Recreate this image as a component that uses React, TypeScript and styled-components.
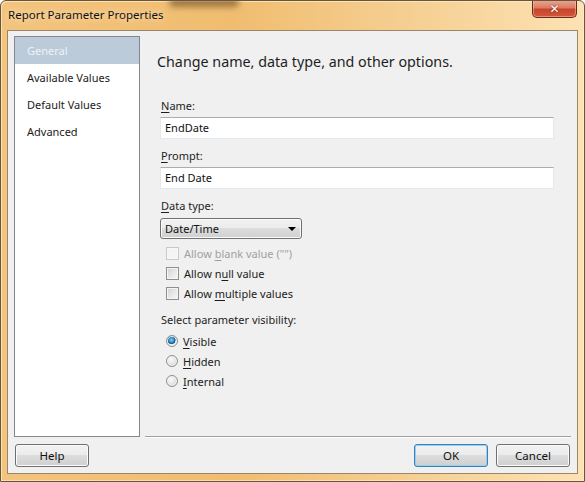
import React from 'react';
import styled, { createGlobalStyle } from 'styled-components';

const Global = createGlobalStyle`
  html, body { margin: 0; padding: 0; background: #ffffff; }
  body { width: 585px; height: 482px; overflow: hidden; }
  * { box-sizing: border-box; }
`;

const Window = styled.div`
  position: relative;
  width: 585px;
  height: 482px;
  display: flex;
  flex-direction: column;
  border: 1px solid #6a5634;
  border-radius: 6px 6px 0 0;
  background: linear-gradient(90deg, #f3c47e 0%, #f0bd70 40%, #f5cf92 70%, #fde2b3 100%);
  box-shadow: inset 1px 1px 0 rgba(255, 240, 210, 0.7), inset -1px -1px 0 rgba(255, 240, 210, 0.6);
  font-family: "Noto Sans", "Segoe UI", sans-serif;
  font-size: 11px;
  color: #000;
  overflow: hidden;
`;

const GlassSmudge = styled.div`
  position: absolute;
  left: 168px;
  top: -4px;
  width: 70px;
  height: 10px;
  border-radius: 6px;
  background: rgba(90, 60, 25, 0.55);
  filter: blur(3px);
  pointer-events: none;
`;

const TitleBar = styled.div`
  height: 29px;
  display: flex;
  justify-content: space-between;
  align-items: flex-start;
  padding-left: 7px;
`;

const Title = styled.div`
  margin-top: 6px;
  font-size: 11.5px;
  color: #111;
  text-shadow: 0 0 6px rgba(255, 245, 225, 0.95);
`;

const CloseButton = styled.div`
  width: 45px;
  height: 18px;
  margin-right: 7px;
  margin-top: -1px;
  border: 1px solid #6b2a1c;
  border-top: none;
  border-radius: 0 0 5px 5px;
  background: linear-gradient(#e9a897 0%, #dc7c63 45%, #c8452a 55%, #d2583c 100%);
  box-shadow: inset 0 0 0 1px rgba(255, 210, 190, 0.45);
  display: flex;
  align-items: center;
  justify-content: center;
  color: #fff;
  font-family: "DejaVu Sans", sans-serif;
  font-weight: bold;
  font-size: 12px;
  text-shadow: 0 0 2px rgba(80, 20, 10, 0.9);
`;

const Client = styled.div`
  flex: 1;
  margin: 0 6px 7px 6px;
  border: 1px solid #9a866a;
  background: #f0f0f0;
  display: flex;
  flex-direction: column;
  padding: 5px 6px 6px 6px;
`;

const Body = styled.div`
  flex: 1;
  display: flex;
`;

const Nav = styled.div`
  width: 126px;
  border: 1px solid #828790;
  background: #fff;
  display: flex;
  flex-direction: column;
`;

const NavItem = styled.div<{ $selected?: boolean }>`
  height: 27px;
  line-height: 27px;
  padding-left: 12px;
  background: ${(p) => (p.$selected ? '#bccbda' : 'transparent')};
  color: ${(p) => (p.$selected ? '#eef2f6' : '#1b1b1b')};
`;

const Main = styled.div`
  flex: 1;
  margin-left: 5px;
  padding-left: 15px;
  display: flex;
  flex-direction: column;
  border-bottom: 1px solid #a0a0a0;
  box-shadow: 0 1px 0 #ffffff;
`;

const Heading = styled.div`
  margin: 16px 0 0 -3px;
  font-size: 14.3px;
  line-height: 20px;
  color: #1e1e1e;
`;

const Label = styled.div<{ $top: number }>`
  margin-top: ${(p) => p.$top}px;
  padding-left: 1px;
  line-height: 16px;
  color: #1e1e1e;
`;

const Key = styled.span`
  text-decoration: underline;
  text-underline-offset: 2px;
`;

const TextBox = styled.div`
  margin-top: 3px;
  width: 394px;
  height: 22px;
  background: #fff;
  border: 1px solid #e3e9ef;
  border-top-color: #abadb3;
  padding-left: 4px;
  line-height: 20px;
  color: #111;
`;

const Select = styled.div`
  position: relative;
  margin-top: 4px;
  width: 142px;
  height: 21px;
  border: 1px solid #707070;
  border-radius: 3px;
  background: linear-gradient(#f2f2f2 0%, #ebebeb 49%, #dddddd 50%, #cfcfcf 100%);
  box-shadow: inset 0 0 0 1px #fbfbfb;
  padding-left: 4px;
  line-height: 19px;
  color: #111;
`;

const Arrow = styled.span`
  position: absolute;
  right: 5px;
  top: 8px;
  width: 0;
  height: 0;
  border-left: 4px solid transparent;
  border-right: 4px solid transparent;
  border-top: 4px solid #000;
`;

const Options = styled.div<{ $top: number }>`
  margin-top: ${(p) => p.$top}px;
  display: flex;
  flex-direction: column;
`;

const OptionRow = styled.div<{ $disabled?: boolean }>`
  height: 20px;
  display: flex;
  align-items: center;
  gap: 5px;
  padding-left: 6px;
  color: ${(p) => (p.$disabled ? '#a0a0a0' : '#1b1b1b')};
`;

const CheckBox = styled.span<{ $disabled?: boolean }>`
  width: 13px;
  height: 13px;
  flex: none;
  border: 1px solid ${(p) => (p.$disabled ? '#c9c9c9' : '#8e8f8f')};
  background: ${(p) =>
    p.$disabled ? '#f4f4f4' : 'linear-gradient(135deg, #cfd1d3 0%, #e9eaeb 60%, #f7f7f7 100%)'};
  box-shadow: inset 0 0 0 1px ${(p) => (p.$disabled ? '#f7f7f7' : '#f4f4f4')};
`;

const Radio = styled.span<{ $checked?: boolean }>`
  width: 12px;
  height: 12px;
  flex: none;
  border-radius: 50%;
  border: 1px solid #8e8f8f;
  background: ${(p) =>
    p.$checked
      ? 'radial-gradient(circle at 45% 40%, #8fd4f6 0%, #2e8cc8 30%, #14558f 48%, #e6e6e6 52%, #f6f6f6 100%)'
      : 'radial-gradient(circle at 40% 35%, #fafafa 0%, #dcdcdc 70%, #cfcfcf 100%)'};
  box-shadow: inset 0 0 0 1px #f4f4f4;
`;

const Footer = styled.div`
  margin-top: 7px;
  display: flex;
  justify-content: space-between;
  padding: 0 1px;
`;

const ButtonGroup = styled.div`
  display: flex;
  gap: 8px;
`;

const Button = styled.div<{ $default?: boolean }>`
  width: 74px;
  height: 23px;
  border: 1px solid ${(p) => (p.$default ? '#3c7fb1' : '#707070')};
  border-radius: 3px;
  background: linear-gradient(#f2f2f2 0%, #ebebeb 49%, #dddddd 50%, #cfcfcf 100%);
  box-shadow: inset 0 0 0 1px ${(p) => (p.$default ? '#8fd3f5' : '#fbfbfb')};
  display: flex;
  align-items: center;
  justify-content: center;
  font-size: 11.5px;
  color: #111;
`;

export default function App() {
  return (
    <>
      <Global />
      <Window>
        <GlassSmudge />
        <TitleBar>
          <Title>Report Parameter Properties</Title>
          <CloseButton>✕</CloseButton>
        </TitleBar>
        <Client>
          <Body>
            <Nav>
              <NavItem $selected>General</NavItem>
              <NavItem>Available Values</NavItem>
              <NavItem>Default Values</NavItem>
              <NavItem>Advanced</NavItem>
            </Nav>
            <Main>
              <Heading>Change name, data type, and other options.</Heading>

              <Label $top={26}>
                <Key>N</Key>ame:
              </Label>
              <TextBox>EndDate</TextBox>

              <Label $top={9}>
                <Key>P</Key>rompt:
              </Label>
              <TextBox>End Date</TextBox>

              <Label $top={9}>
                <Key>D</Key>ata type:
              </Label>
              <Select>
                Date/Time
                <Arrow />
              </Select>

              <Options $top={4}>
                <OptionRow $disabled>
                  <CheckBox $disabled />
                  <span>
                    Allow <Key>b</Key>lank value ("")
                  </span>
                </OptionRow>
                <OptionRow>
                  <CheckBox />
                  <span>
                    Allow n<Key>u</Key>ll value
                  </span>
                </OptionRow>
                <OptionRow>
                  <CheckBox />
                  <span>
                    Allow <Key>m</Key>ultiple values
                  </span>
                </OptionRow>
              </Options>

              <Label $top={9}>Select parameter visibility:</Label>
              <Options $top={3}>
                <OptionRow>
                  <Radio $checked />
                  <span>
                    <Key>V</Key>isible
                  </span>
                </OptionRow>
                <OptionRow>
                  <Radio />
                  <span>
                    <Key>H</Key>idden
                  </span>
                </OptionRow>
                <OptionRow>
                  <Radio />
                  <span>
                    <Key>I</Key>nternal
                  </span>
                </OptionRow>
              </Options>
            </Main>
          </Body>
          <Footer>
            <Button>Help</Button>
            <ButtonGroup>
              <Button $default>OK</Button>
              <Button>Cancel</Button>
            </ButtonGroup>
          </Footer>
        </Client>
      </Window>
    </>
  );
}
